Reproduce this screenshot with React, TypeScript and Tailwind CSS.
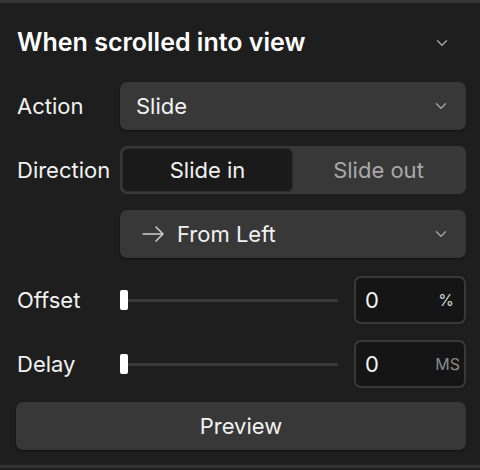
import { ChevronDown } from "lucide-react";

const Chevron = () => <ChevronDown size={18} strokeWidth={1.75} className="text-[#a8a8a8]" />;

const SliderRow = ({ label, unit }: { label: string; unit: string }) => (
  <div className="flex items-center h-12">
    <span className="w-[103px]">{label}</span>
    <div className="relative w-[218px] h-5 flex items-center">
      <div className="w-full h-[3px] rounded-full bg-[#3a3a3a]" />
      <div className="absolute left-0 top-0 w-2 h-5 rounded-[2px] bg-white" />
    </div>
    <div className="ml-auto w-[112px] h-12 rounded-[7px] border-2 border-[#383838] bg-[#151515] flex items-center justify-between pl-[9px] pr-[4px]">
      <span>0</span>
      <span className={unit === "%" ? "text-[16px] text-[#d8d8d8] pr-[6px]" : "text-[16px] text-[#8a8a8a]"}>{unit}</span>
    </div>
  </div>
);

export default function App() {
  return (
    <div className="w-[480px] h-[470px] bg-[#1e1e1e] text-[#f2f2f2] text-[22px] border-t-[3px] border-[#363636] font-['Inter','Liberation_Sans',sans-serif]">
      <div className="pl-4 pr-[14px] pt-[23px] flex flex-col">
        <div className="flex items-center justify-between h-[34px] pl-[1px]">
          <h2 className="text-[25px] font-semibold text-white">When scrolled into view</h2>
          <span className="pr-[15px]"><Chevron /></span>
        </div>

        <div className="flex items-center mt-[22px] h-12">
          <span className="w-[104px] pl-[1px]">Action</span>
          <button className="flex-1 h-12 rounded-[7px] bg-[#383838] flex items-center justify-between pl-[16px] pr-[16px] shadow-[0_1px_2px_rgba(0,0,0,0.5)]">
            <span>Slide</span>
            <Chevron />
          </button>
        </div>

        <div className="flex items-center mt-4 h-12">
          <span className="w-[104px] pl-[1px]">Direction</span>
          <div className="flex-1 h-12 rounded-[7px] bg-[#383838] p-[2px] flex">
            <div className="w-[171px] rounded-[6px] bg-[#1a1a1a] border border-[#2c2c2c] flex items-center justify-center">Slide in</div>
            <div className="flex-1 flex items-center justify-center text-[#a8a8a8]">Slide out</div>
          </div>
        </div>

        <div className="flex mt-4 h-12">
          <button className="ml-[104px] flex-1 h-12 rounded-[7px] bg-[#383838] flex items-center justify-between pl-[22px] pr-[16px] shadow-[0_1px_2px_rgba(0,0,0,0.5)]">
            <span className="flex items-center gap-[13px]">
              <svg width="22" height="16" viewBox="0 0 22 16" fill="none" stroke="#cfcfcf" strokeWidth="1.5" strokeLinecap="round" strokeLinejoin="round">
                <path d="M1 8h20M14 1l7 7-7 7" />
              </svg>
              From Left
            </span>
            <Chevron />
          </button>
        </div>

        <div className="mt-[18px] flex flex-col gap-4 pl-[1px]">
          <SliderRow label="Offset" unit="%" />
          <SliderRow label="Delay" unit="MS" />
        </div>

        <button className="mt-[14px] h-12 w-full rounded-[7px] bg-[#383838] flex items-center justify-center shadow-[0_1px_2px_rgba(0,0,0,0.5)]">
          Preview
        </button>
      </div>
      <div className="mt-[15px] h-[3px] bg-[#333333]" />
    </div>
  );
}
